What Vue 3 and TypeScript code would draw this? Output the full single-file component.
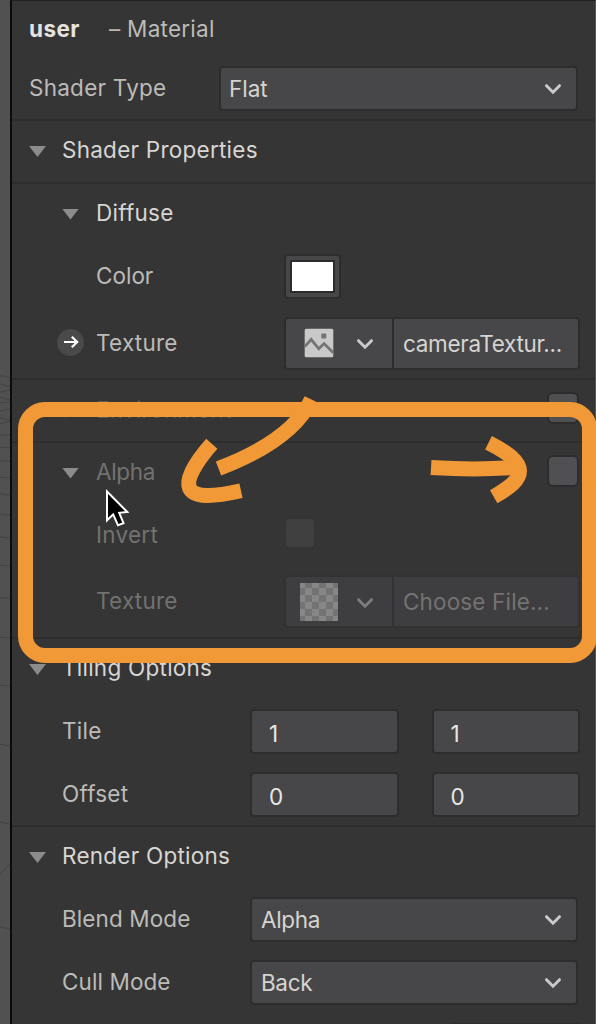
<script setup lang="ts">
import { ref } from 'vue'

const material = ref({
  name: 'user',
  shaderType: 'Flat',
  texture: 'cameraTextur...',
  tile: [1, 1],
  offset: [0, 0],
  blendMode: 'Alpha',
  cullMode: 'Back',
})
</script>

<template>
  <div class="stage">
    <aside class="viewport">
      <svg width="10" height="1024" viewBox="0 0 10 1024" fill="none" stroke="#424242" stroke-width="1">
        <path d="M0 376h5l5 2M0 384l10 3M0 392l10-2M0 397l10 3M0 403l10-1M0 411l10-2M0 418l10 2M0 424l10-3M0 435h10M0 447l10 1M0 461h10M0 477l10 1M0 494l10 1M0 514l10 1M0 537l10 1M0 565l10 1M0 598h10M0 637l10 1M0 685l10 1M0 744l10 2M0 822l10 2M0 874l10-10M0 927l10 2" />
      </svg>
    </aside>
    <main class="panel">
      <header class="row head">
        <strong class="name">{{ material.name }}</strong>
        <span class="kind">– Material</span>
      </header>
      <div class="row shader line">
        <span class="label">Shader Type</span>
        <div class="select wide">
          <span class="value flat">{{ material.shaderType }}</span>
          <svg class="chev" viewBox="0 0 18 12"><path d="M2.5 2.7 9 9.2l6.5-6.5" /></svg>
        </div>
      </div>

      <div class="row title line">
        <i class="tri"></i><span class="label bright">Shader Properties</span>
      </div>

      <section class="line diffuse">
        <div class="row sub">
          <i class="tri"></i><span class="label bright">Diffuse</span>
        </div>
        <div class="row color">
          <span class="label">Color</span>
          <div class="swatch"><div class="fill"></div></div>
        </div>
        <div class="row texture">
          <span class="link">
            <svg width="16" height="14" viewBox="0 0 16 14"><path d="M1 7h13M8.8 1.7 14.2 7l-5.4 5.3" /></svg>
          </span>
          <span class="label">Texture</span>
          <div class="picker">
            <div class="thumb">
              <svg class="image" width="30" height="30" viewBox="0 0 30 30">
                <rect x=".7" y=".7" width="28.6" height="28.6" rx="1.5" fill="#c9c9ca" />
                <rect x="17.3" y="5.6" width="5" height="5" rx="1" fill="#747475" />
                <path d="M.7 18.5 7.2 11.5l7.6 9.3 5.3-5.2 9.2 9.1" fill="none" stroke="#747475" stroke-width="2.8" />
              </svg>
              <svg class="chev" viewBox="0 0 18 12"><path d="M2.5 2.7 9 9.2l6.5-6.5" /></svg>
            </div>
            <span class="file tight">{{ material.texture }}</span>
          </div>
        </div>
      </section>

      <div class="row env line">
        <i class="tri closed"></i><span class="label hidden">Environment</span>
        <span class="check end"></span>
      </div>

      <section class="line alpha">
        <div class="row sub">
          <i class="tri"></i><span class="label narrow">Alpha</span>
          <span class="check end"></span>
        </div>
        <div class="row invert">
          <span class="label">Invert</span>
          <span class="check off"></span>
        </div>
        <div class="row texture">
          <span class="label">Texture</span>
          <div class="picker off">
            <div class="thumb">
              <span class="checker"></span>
              <svg class="chev" viewBox="0 0 18 12"><path d="M2.5 2.7 9 9.2l6.5-6.5" /></svg>
            </div>
            <span class="file">Choose File...</span>
          </div>
        </div>
      </section>

      <section class="line tiling">
        <div class="row title">
          <i class="tri"></i><span class="label bright">Tiling Options</span>
        </div>
        <div class="row tile">
          <span class="label">Tile</span>
          <div class="pair"><span v-for="(v, i) in material.tile" :key="i" class="number">{{ v }}</span></div>
        </div>
        <div class="row offset">
          <span class="label">Offset</span>
          <div class="pair"><span v-for="(v, i) in material.offset" :key="i" class="number">{{ v }}</span></div>
        </div>
      </section>

      <section class="render">
        <div class="row title">
          <i class="tri"></i><span class="label bright">Render Options</span>
        </div>
        <div class="row mode">
          <span class="label">Blend Mode</span>
          <div class="select">
            <span class="value narrow">{{ material.blendMode }}</span>
            <svg class="chev" viewBox="0 0 18 12"><path d="M2.5 2.7 9 9.2l6.5-6.5" /></svg>
          </div>
        </div>
        <div class="row mode">
          <span class="label">Cull Mode</span>
          <div class="select">
            <span class="value narrow">{{ material.cullMode }}</span>
            <svg class="chev" viewBox="0 0 18 12"><path d="M2.5 2.7 9 9.2l6.5-6.5" /></svg>
          </div>
        </div>
      </section>
      <div class="next"></div>
    </main>

    <svg class="annotations" width="596" height="1024" viewBox="0 0 596 1024">
      <g fill="none" stroke="#f09936" stroke-width="15">
        <rect x="25.5" y="409.5" width="564" height="246" rx="19.5" />
        <path d="M311.5 399.5C297 430 262 452 218.5 468.5" />
        <path d="M211.8 443.8C194 464 186 480 189.5 488C194 498 213 497 241 490.8" />
        <path d="M431 467.5Q480 470.5 520 467" />
        <path d="M488.5 442.7C509 453 519.5 462 519.5 471C519.5 480 510 487.5 493.7 496.7" />
      </g>
      <path d="M107 491.5V520.3L113.2 514.4L118 525.3L123.5 523.2L119.2 512.8L127.3 512Z" fill="#000" stroke="#fff" stroke-width="2" />
    </svg>
  </div>
</template>

<style>
body {
  margin: 0;
  background: #353535;
}
</style>

<style scoped>
.stage {
  position: relative;
  display: flex;
  width: 596px;
  height: 1024px;
  overflow: hidden;
  font-family: Inter, "Liberation Sans", sans-serif;
  font-size: 22.5px;
  line-height: 28px;
  letter-spacing: 0.25px;
  color: #bdbbb8;
}
.viewport {
  width: 10px;
  flex: none;
  background: #515151;
}
.viewport svg {
  display: block;
}
.panel {
  flex: 1;
  box-sizing: border-box;
  border-left: 2px solid #0b0b0b;
  border-right: 1px solid #565656;
  border-top: 1px solid #202020;
  background: #353535;
}
.row {
  display: flex;
  align-items: center;
  box-sizing: border-box;
  white-space: nowrap;
}
.line {
  border-bottom: 2px solid #2d2d2d;
}
.label {
  flex: none;
}
.bright {
  color: #d8d6d3;
}
.narrow {
  letter-spacing: -0.35px;
}

.head {
  height: 56px;
  padding-left: 17px;
}
.name {
  width: 80px;
  color: #e6e3df;
  font-weight: 700;
  letter-spacing: 0.4px;
}
.shader {
  height: 64px;
  padding-left: 17px;
}
.shader .label {
  width: 190px;
}
.title {
  height: 61px;
  padding: 0 0 2px 17px;
}
.title.line {
  height: 63px;
}
.title .label {
  padding-bottom: 1px;
}
.title .tri {
  margin-right: 16px;
}
.tri {
  flex: none;
  width: 17px;
  height: 11px;
  background: #8c8c8c;
  clip-path: polygon(0 0, 100% 0, 50% 100%);
  position: relative;
  top: 1px;
}

.select {
  box-sizing: border-box;
  display: flex;
  align-items: center;
  justify-content: space-between;
  width: 328px;
  height: 45px;
  padding: 1px 14px 0 9px;
  border: 2px solid #2d2d2e;
  border-radius: 4px;
  background: #474749;
  color: #d6d4d0;
}
.select.wide {
  width: 359px;
  padding-left: 8px;
}
.flat {
  letter-spacing: 0;
}
.chev {
  display: block;
  width: 18px;
  height: 12px;
  fill: none;
  stroke: #cacaca;
  stroke-width: 3;
  stroke-linecap: round;
}

.sub {
  height: 58px;
  padding-left: 50px;
}
.sub .tri {
  margin-right: 17px;
}
.color {
  height: 68px;
  padding-left: 84px;
}
.color .label {
  width: 188px;
  letter-spacing: 0;
}
.swatch {
  box-sizing: border-box;
  width: 57px;
  height: 45px;
  padding: 4px;
  border: 2px solid #2d2d2e;
  border-radius: 4px;
  background: #474749;
}
.fill {
  box-sizing: border-box;
  width: 45px;
  height: 33px;
  border: 2px solid #2b2b2c;
  background: #fff;
}
.texture {
  height: 68px;
  padding: 0 0 2px 84px;
}
.texture .label {
  width: 188px;
  padding-bottom: 1px;
}
.link {
  display: flex;
  align-items: center;
  justify-content: center;
  flex: none;
  width: 27px;
  height: 27px;
  margin: 0 12px 2px -39px;
  border-radius: 50%;
  background: #4a4a4b;
}
.link svg {
  fill: none;
  stroke: #fff;
  stroke-width: 2.2;
}
.picker {
  box-sizing: border-box;
  display: flex;
  width: 296px;
  height: 53px;
  border: 2px solid #2d2d2e;
  border-radius: 4px;
  background: #474749;
  color: #d6d4d0;
}
.thumb {
  box-sizing: border-box;
  display: flex;
  align-items: center;
  flex: none;
  width: 108px;
  padding-left: 18px;
  border-right: 2px solid #2d2d2e;
}
.thumb .chev {
  margin: 2px 0 0 22px;
}
.file {
  padding-left: 9px;
  line-height: 50px;
}
.tight {
  letter-spacing: -0.3px;
}

.env {
  height: 63px;
  padding: 0 16px 5px 53px;
}
.tri.closed {
  width: 11px;
  height: 17px;
  margin-right: 20px;
  background: #4c4c4c;
  clip-path: polygon(0 0, 100% 50%, 0 100%);
  top: 2px;
}
.hidden {
  color: #5c5b59;
  padding-top: 4px;
}
.check {
  box-sizing: border-box;
  flex: none;
  width: 32px;
  height: 32px;
  border: 2px solid #2c2c2d;
  border-radius: 6px;
  background: #505052;
}
.check.end {
  margin-left: auto;
}
.check.off {
  margin-bottom: 3px;
  border-color: #343434;
  background: #404040;
}
.alpha .sub {
  padding-right: 16px;
}
.alpha .sub .check {
  margin-bottom: 3px;
}
.alpha .label {
  color: #737270;
}
.invert {
  height: 67px;
  padding-left: 84px;
}
.invert .label {
  width: 188px;
}
.alpha .texture {
  height: 69px;
  padding-bottom: 2px;
}
.alpha .texture .label {
  padding-bottom: 1px;
}
.picker.off {
  border-color: #323233;
  background: #3e3e40;
  color: #747371;
}
.picker.off .thumb {
  padding-left: 14px;
  border-color: #323233;
}
.picker.off .chev {
  margin-left: 18px;
  stroke: #7c7c7c;
}
.picker.off .file {
  letter-spacing: 0.15px;
}
.checker {
  width: 38px;
  height: 38px;
  background: repeating-conic-gradient(#737374 0 25%, #878787 0 50%) -2px -2px / 14px 14px;
}

.tile,
.offset,
.mode {
  height: 63px;
  padding-left: 50px;
}
.tile .label,
.offset .label,
.mode .label {
  width: 188px;
  padding-bottom: 1px;
}
.offset {
  height: 62px;
}
.mode .label {
  letter-spacing: 0.1px;
}
.pair {
  display: flex;
  gap: 33px;
}
.number {
  box-sizing: border-box;
  width: 148.5px;
  height: 45px;
  padding: 2px 0 0 17px;
  border: 2px solid #2d2d2e;
  border-radius: 4px;
  background: #474749;
  color: #e8e6e3;
  line-height: 41px;
}
.next {
  width: 128px;
  height: 2px;
  margin: 9px 0 0 440px;
  background: #2e2e2e;
}
.annotations {
  position: absolute;
  inset: 0;
}
</style>
